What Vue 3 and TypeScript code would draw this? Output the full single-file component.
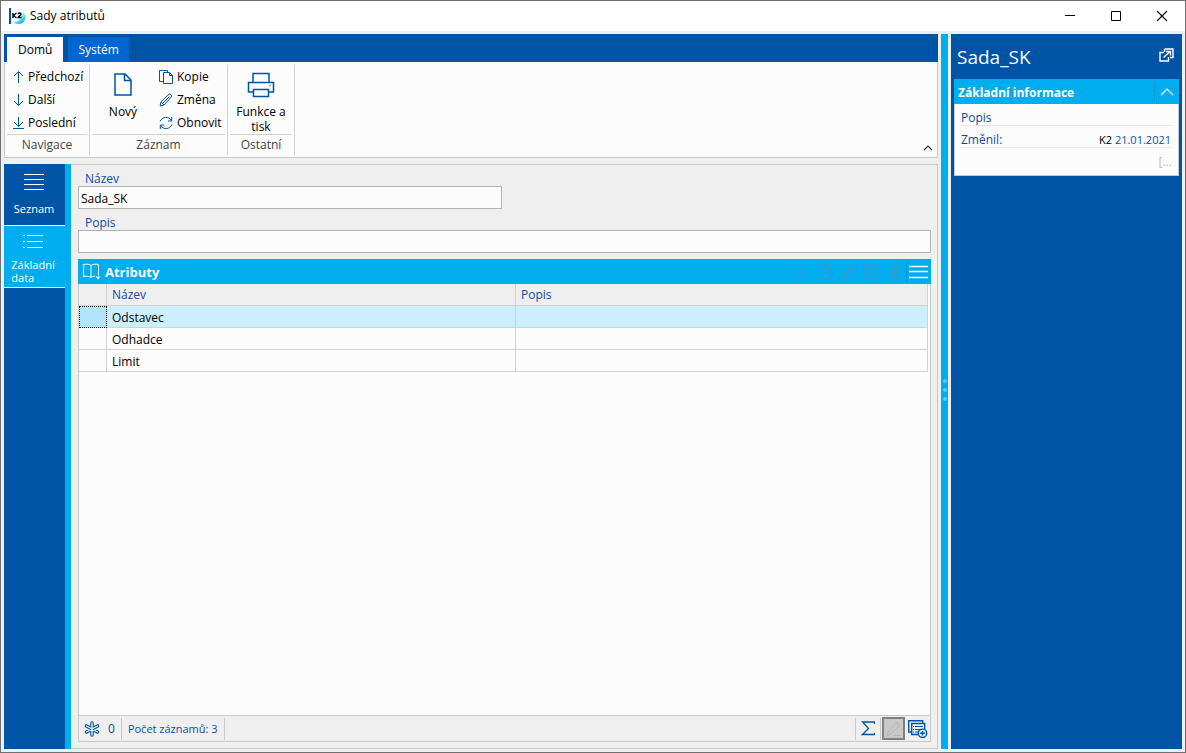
<script setup lang="ts">
import { ref } from 'vue'

interface Row { name: string; note: string }

const name = ref('Sada_SK')
const note = ref('')
const selected = ref(0)
const rows: Row[] = [
  { name: 'Odstavec', note: '' },
  { name: 'Odhadce', note: '' },
  { name: 'Limit', note: '' },
]
</script>

<template>
  <div class="window">
    <header class="titlebar">
      <svg class="logo" width="17" height="17" viewBox="0 0 17 17">
        <defs>
          <linearGradient id="drop" x1="0" y1="0" x2="1" y2="1">
            <stop offset="0.35" stop-color="#fff" />
            <stop offset="0.7" stop-color="#3be0f5" />
            <stop offset="1" stop-color="#0878d8" />
          </linearGradient>
        </defs>
        <path d="M14 3c2 2.500 2 4.500 2 7 0 4-3 6-7 6-3 0-5-1-6-3 5 2 9-1 11-10z" fill="url(#drop)" />
        <path d="M6 14.500c5 .5 8-1.500 9-5v3c-2 3-6 4-9 2z" fill="#22c5ef" />
        <path d="M0 0h2v16H0z" fill="#0054a6" />
        <path d="M4 5v5M7.500 5L4.500 7.500 7.500 10M9 6c1-1.500 3-1 3 .3C12 7.500 9 8.500 9 9.500h3.500" fill="none" stroke="#111" stroke-width="1.500" />
      </svg>
      <h1>Sady atributů</h1>
      <div class="winbtns">
        <button aria-label="Minimalizovat"><svg width="12" height="12"><path d="M1 5.500h10" stroke="#000" /></svg></button>
        <button aria-label="Maximalizovat"><svg width="12" height="12"><path d="M1.500 1.500h9v9h-9z" fill="none" stroke="#000" /></svg></button>
        <button aria-label="Zavřít"><svg width="12" height="12"><path d="M1 1l10 10M11 1L1 11" stroke="#000" stroke-width="1.100" /></svg></button>
      </div>
    </header>

    <div class="body">
      <div class="left">
        <nav class="tabs">
          <button class="tab active">Domů</button>
          <button class="tab">Systém</button>
        </nav>
        <section class="ribbon">
          <div class="group nav-group">
            <div class="tools list">
              <button class="small"><svg width="12" height="14" viewBox="0 0 12 14"><path d="M6.500 13V2M2 6l4.500-4.500L11 6" /></svg>Předchozí</button>
              <button class="small"><svg width="12" height="14" viewBox="0 0 12 14"><path d="M6.500 1v11M2 8l4.500 4.500L11 8" /></svg>Další</button>
              <button class="small"><svg width="12" height="14" viewBox="0 0 12 14"><path d="M6.500 1v9M2 6l4.500 4.500L11 6M1 12.500h11" /></svg>Poslední</button>
            </div>
            <div class="caption">Navigace</div>
          </div>
          <div class="group rec-group">
            <div class="tools">
              <button class="big"><svg width="26" height="26" viewBox="0 0 26 26"><path d="M5 2h10l6 6v15H5zM14.500 2v6.500H21" stroke-width="1.500" /></svg>Nový</button>
              <div class="list">
                <button class="small"><svg width="14" height="14" viewBox="0 0 14 14"><path d="M4 11.500H.5v-11h8V2M4.500 2.500h6l3 3v8h-9zM10.500 2.500v3h3" /></svg>Kopie</button>
                <button class="small"><svg width="14" height="14" viewBox="0 0 14 14"><path d="M1 13l1-4L10 1.200c1-.8 3.500 1.300 2.500 2.600L5 12zM2.200 9L5 12M3.500 10.500l7-7" /></svg>Změna</button>
                <button class="small"><svg width="14" height="14" viewBox="0 0 14 14"><path d="M1 5.500C3 .5 10 0 12.500 4.500M12.700 1v4H9M13 8.500C11 13.500 4 14 1.500 9.500M1.300 13V9H5" /></svg>Obnovit</button>
              </div>
            </div>
            <div class="caption">Záznam</div>
          </div>
          <div class="group other-group">
            <div class="tools">
              <button class="big"><svg width="28" height="26" viewBox="0 0 28 26"><path d="M6 10V1.500h16V10M6 20H1.500V10.500h25V20H22M6.500 17.500h15v7h-15zM22.500 13.500h1" stroke-width="1.500" /></svg>Funkce a<br>tisk</button>
            </div>
            <div class="caption">Ostatní</div>
          </div>
          <button class="collapse" aria-label="Sbalit pás"><svg width="10" height="6"><path d="M1 5l4-4 4 4" fill="none" stroke="#333" stroke-width="1.200" /></svg></button>
        </section>

        <div class="work">
          <nav class="side">
            <button><svg width="20" height="18"><path d="M0 1.500h20M0 6.500h20M0 11.500h20M0 16.500h20" stroke="#fff" /></svg><span>Seznam</span></button>
            <button class="active"><svg width="20" height="14"><path d="M0 1.500h2M4 1.500h16M0 7.500h2M4 7.500h16M0 13.500h2M4 13.500h16" stroke="#fff" /></svg><span>Základní<br>data</span></button>
          </nav>
          <main class="content">
            <label for="name">Název</label>
            <input id="name" v-model="name" class="short" type="text">
            <label for="note">Popis</label>
            <input id="note" v-model="note" type="text">

            <section class="grid">
              <header class="grid-head">
                <svg width="18" height="17" viewBox="0 0 18 17"><path d="M8 14.500V2.500C6.500 1 3.500 1 .5 1.500v12c3-.5 6-.5 7.500 1M8 2.500C9.500 1 12.500 1 15.500 1.500v11M8 14.500c1-1 2-1.300 4-1.300" fill="none" stroke="#fff" /><path d="M12.500 13.500h5L15 16.500z" fill="#fff" /></svg>
                <h2>Atributy</h2>
                <div class="ghost">
                  <button disabled aria-label="Spustit"><svg width="16" height="16"><path d="M3.500 3v10l8-5z" /></svg></button>
                  <button disabled aria-label="Nový"><svg width="16" height="16"><path d="M2.500 1h7l4 4v10h-11zM9.500 1v4.500h4" /></svg></button>
                  <button disabled aria-label="Změna"><svg width="16" height="16"><path d="M1 15l1-4 9-9c1.500-1 4 1 3 3L5 14zM3 11l2 2M4 12l8-8" /></svg></button>
                  <button disabled aria-label="Kopie"><svg width="16" height="16"><path d="M5 12.500H1V1h9v2M5.500 3.500H15V15H5.500z" /></svg></button>
                  <button disabled aria-label="Smazat"><svg width="16" height="16"><path d="M3 3.500h11M6.500 3V1h4v2M3.500 5v10h10V5M6.500 6v7M8.500 6v7M10.500 6v7" /></svg></button>
                </div>
                <button class="menu" aria-label="Nabídka"><svg width="20" height="14"><path d="M0 1.500h19M0 6.500h19M0 12.500h19" stroke="#fff" stroke-width="1.400" /></svg></button>
              </header>
              <div class="grid-body">
                <table>
                  <thead>
                    <tr><th class="mark" aria-label="Výběr"></th><th class="name">Název</th><th>Popis</th></tr>
                  </thead>
                  <tbody>
                    <tr v-for="(row, i) in rows" :key="row.name" :class="{ selected: i === selected }" @click="selected = i">
                      <td class="mark"></td><td>{{ row.name }}</td><td>{{ row.note }}</td>
                    </tr>
                  </tbody>
                </table>
              </div>
              <footer class="status">
                <div class="cell">
                  <svg width="16" height="16" viewBox="0 0 16 16"><path d="M8 2v12M2.500 5l11 6M13.500 5l-11 6" stroke="#0054a6" stroke-width="3.600" stroke-linecap="round" /><path d="M8 2v12M2.500 5l11 6M13.500 5l-11 6" stroke="#efefef" stroke-width="1.400" stroke-linecap="round" /></svg>
                  <span>0</span>
                </div>
                <div class="cell count">Počet záznamů: 3</div>
                <div class="cell sum"><button aria-label="Součet"><svg width="14" height="15"><path d="M13.500 3V1H1.500l6 6.500-6 6H13.500V12" fill="none" stroke="#0054a6" stroke-width="1.300" /></svg></button></div>
                <button class="edit" disabled aria-label="Upravit"><svg width="16" height="16"><path d="M1 15l1-4 8-9c1-1 4 1 3 3L5 13zM8 14.500h7" fill="none" stroke="#b6b6b6" /></svg></button>
                <button class="views" aria-label="Přidat pohled"><svg width="20" height="18" viewBox="0 0 20 18"><path d="M3 12H.7V.7h14V3" /><path d="M11 14.500H3.700V3.500h13V9" /><path d="M5 6.500h1M7 6.500h8M5 9.500h1M7 9.500h5M5 12h1M7 12h3" stroke-width="1" /><circle cx="14.500" cy="13.300" r="4.200" fill="#efefef" /><path d="M12 13.300h5M14.500 11v4.600" /></svg></button>
              </footer>
            </section>
          </main>
        </div>
      </div>

      <div class="splitter"><i></i><i></i><i></i></div>

      <aside class="info">
        <div class="info-title">
          <h2>Sada_SK</h2>
          <button aria-label="Otevřít v okně"><svg width="15" height="14" viewBox="0 0 15 14"><path d="M5.500 1h8.500v8.500h-3M5.500 1v3M5 4.500H1V13h8.500V9" /><path d="M4.500 9.500L11 3.500M7 3.500h4.500V7.500" /></svg></button>
        </div>
        <div class="card-head">
          <h3>Základní informace</h3>
          <button aria-label="Sbalit"><svg width="14" height="8"><path d="M1 7l6-6 6 6" fill="none" stroke="#fff" stroke-width="1.200" /></svg></button>
        </div>
        <div class="card">
          <div class="line">Popis</div>
          <div class="line"><span>Změnil:</span><span class="value"><b>K2</b> 21.01.2021</span></div>
          <div class="more">[...</div>
        </div>
      </aside>
    </div>
  </div>
</template>

<style>
body { margin: 0; }
</style>

<style scoped>
* { box-sizing: border-box; }
.window {
  height: 100vh;
  display: flex;
  flex-direction: column;
  border: 1px solid #707070;
  background: #efefef;
  font: 12px/16px "Open Sans", "Noto Sans", sans-serif;
  color: #000;
}
button { font: inherit; color: inherit; border: 0; padding: 0; margin: 0; background: none; display: flex; align-items: center; }
svg { flex: none; display: block; }
h1, h2, h3 { margin: 0; font-weight: 400; }

.titlebar { height: 30px; flex: none; display: flex; align-items: center; background: #fff; padding-left: 8px; }
.titlebar h1 { font-size: 12px; margin-left: 4px; flex: 1; }
.winbtns { display: flex; }
.winbtns button { width: 46px; height: 28px; justify-content: center; }

.body { flex: 1; min-height: 0; display: flex; gap: 3px; padding: 3px; }
.left { flex: 1; min-width: 0; display: flex; flex-direction: column; }

.tabs { height: 28px; flex: none; display: flex; gap: 5px; padding: 3px 3px 0; background: #0054a6; }
.tab { height: 25px; padding: 0 10px; background: #0067d2; color: #fff; }
.tab.active { background: #fcfcfc; color: #000; padding: 0 11px; }

.ribbon { height: 96px; flex: none; display: flex; background: #fcfcfc; border: 1px solid #c8c8c8; border-top: 0; padding: 3px 0 2px; }
.group { display: flex; flex-direction: column; border-right: 1px solid #d2d2d2; padding: 0 2px; }
.nav-group { width: 85px; }
.rec-group { width: 138px; }
.other-group { width: 67px; }
.tools { flex: 1; display: flex; }
.list { display: flex; flex-direction: column; }
.small { height: 23px; gap: 4px; padding-left: 5px; white-space: nowrap; }
.small svg, .big svg { fill: none; stroke: #0054a6; }
.big { flex: 1; flex-direction: column; line-height: 15px; padding-top: 7px; gap: 6px; }
.rec-group .big { flex: none; width: 62px; }
.caption { height: 21px; flex: none; border-top: 1px solid #d2d2d2; text-align: center; line-height: 19px; color: #444; }
.collapse { margin-left: auto; align-self: flex-end; padding: 0 4px 4px 0; }

.work { flex: 1; min-height: 0; display: flex; margin-top: 6px; }
.side { width: 67px; flex: none; background: #0054a6; border-right: 6px solid #00adef; color: #fff; }
.side button { width: 100%; height: 62px; flex-direction: column; border-bottom: 1px solid #fff; padding: 9px 1px 0 0; gap: 11px; line-height: 13px; text-align: left; font-size: 11px; }
.side button.active { background: #00adef; padding: 8px 3px 0 0; gap: 10px; }
.content { flex: 1; min-width: 0; display: flex; flex-direction: column; border: 1px solid #c8c8c8; border-left: 0; padding: 6px 6px 6px 7px; }
.content label { height: 15px; line-height: 15px; padding-left: 7px; color: #0f4ca5; }
.content input { height: 23px; width: 100%; border: 1px solid #b4b4b4; background: #fcfcfc; padding: 1px 2px 0; font: inherit; color: #000; outline: 0; margin: 0 0 6px; }
.content input.short { width: 424px; }

.grid { flex: 1; min-height: 0; display: flex; flex-direction: column; }
.grid-head { height: 25px; flex: none; display: flex; align-items: center; background: #00adef; color: #fff; padding: 0 2px 0 5px; }
.grid-head h2 { font-size: 13px; font-weight: 700; margin-left: 4px; flex: 1; }
.ghost { display: flex; gap: 7px; padding-right: 4px; }
.ghost svg { fill: none; stroke: #289fd2; stroke-width: 1.5; }
.menu { height: 21px; padding-left: 2px; border-left: 1px solid #0095d0; }
.grid-body { flex: 1; min-height: 0; background: #fcfcfc; border: 1px solid #c8c8c8; border-top: 0; padding-right: 2px; }
table { width: 100%; border-spacing: 0; table-layout: fixed; }
th, td { height: 22px; padding: 0 5px; border-right: 1px solid #d2d2d2; border-bottom: 1px solid #d2d2d2; text-align: left; font-weight: 400; line-height: 16px; }
td { padding-top: 2px; }
th { background: #efefef; color: #0f4ca5; }
.mark { width: 28px; }
.name { width: 409px; }
.selected td { background: #cbeffc; }
.selected .mark { background: #b0e5fb; outline: 1px dotted #000; outline-offset: -1px; }
.status { height: 27px; flex: none; display: flex; align-items: center; border: 1px solid #c8c8c8; border-top: 1px solid #c8c8c8; margin-top: -1px; color: #0f4ca5; padding-right: 2px; }
.cell { height: 22px; display: flex; align-items: center; gap: 8px; padding: 0 6px; border-right: 1px solid #c8c8c8; }
.cell:first-child { padding-left: 5px; }
.count { font-size: 11px; }
.sum { margin-left: auto; border-left: 1px solid #c8c8c8; padding: 0 5px; }
.edit { width: 23px; height: 23px; justify-content: center; border: 2px solid #808080; background: #c8c8c8; margin: 0 3px 0 1px; }
.views svg { fill: none; stroke: #0054a6; stroke-width: 1.4; }

.splitter { width: 7px; flex: none; background: #00adef; display: flex; flex-direction: column; align-items: center; justify-content: center; gap: 5px; padding-bottom: 4px; }
.splitter i { width: 4px; height: 4px; border-radius: 2px; background: #55c8f5; }

.info { width: 231px; flex: none; background: #0054a6; padding: 0 3px; color: #fff; }
.info-title { height: 45px; display: flex; align-items: center; justify-content: space-between; padding: 0 5px 0 3px; }
.info-title h2 { font-size: 19px; line-height: 26px; }
.info-title button { padding-bottom: 4px; }
.info-title svg { fill: none; stroke: #fff; stroke-width: 1.4; }
.card-head { height: 25px; display: flex; align-items: center; background: #00adef; padding-left: 4px; }
.card-head h3 { flex: 1; font-size: 12px; font-weight: 700; padding-top: 2px; }
.card-head button { height: 21px; width: 25px; justify-content: center; border-left: 1px solid #0095d0; }
.card { background: #fcfcfc; border: 1px solid #c8c8c8; border-top: 0; color: #0f4ca5; padding: 0 6px; height: 72px; }
.line { height: 22px; display: flex; align-items: flex-end; justify-content: space-between; padding-right: 1px; line-height: 15px; border-bottom: 1px solid #e6e6e6; }
.value { font-size: 11px; }
.line b { font-weight: 400; color: #000; }
.more { text-align: right; color: #b8b8c8; line-height: 28px; }
</style>
